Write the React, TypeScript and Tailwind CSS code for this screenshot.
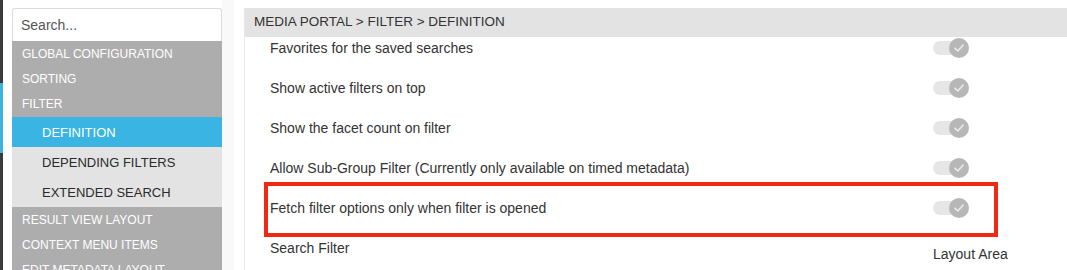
import React from 'react';

const font = { fontFamily: '"Liberation Sans", Arial, sans-serif' };

const Toggle: React.FC = () => (
  <div className="relative w-[36px] h-[22px] flex items-center">
    <div className="w-[30px] h-[14px] rounded-full bg-[#e6e6e6]" />
    <div className="absolute left-[16px] top-[1px] w-[20px] h-[20px] rounded-full bg-[#b7b7b7] flex items-center justify-center">
      <svg width="12" height="12" viewBox="0 0 12 12" fill="none" stroke="#ececec" strokeWidth="1.6" strokeLinecap="round" strokeLinejoin="round">
        <path d="M2 6.4 L4.8 9 L10 3.2" />
      </svg>
    </div>
  </div>
);

const mainItems1 = ['GLOBAL CONFIGURATION', 'SORTING', 'FILTER'];
const subItems = ['DEFINITION', 'DEPENDING FILTERS', 'EXTENDED SEARCH'];
const mainItems2 = ['RESULT VIEW LAYOUT', 'CONTEXT MENU ITEMS', 'EDIT METADATA LAYOUT'];

const rows = [
  'Favorites for the saved searches',
  'Show active filters on top',
  'Show the facet count on filter',
  'Allow Sub-Group Filter (Currently only available on timed metadata)',
  'Fetch filter options only when filter is opened',
];

export default function App() {
  return (
    <div className="flex w-[1067px] h-[270px] overflow-hidden bg-white text-[#333]" style={font}>
      {/* outer nav edge */}
      <div className="w-[3px] flex flex-col shrink-0">
        <div className="h-[83px] bg-[#3b3b3b]" />
        <div className="h-[70px] bg-[#3ab4e2]" />
        <div className="flex-1 bg-[#3b3b3b]" />
      </div>

      {/* sidebar */}
      <div className="w-[219px] pl-[9px] pt-[8px] shrink-0">
        <div className="h-[33px] border border-[#dcdcdc] border-b-0 rounded-t-[3px] bg-white flex items-center pl-[8px] text-[14px] text-[#555]">
          Search...
        </div>
        <div className="bg-[#adadad] pb-[1px]">
          {mainItems1.map(i => (
            <div key={i} className="h-[25px] flex items-center pl-[10px] text-[12px] text-white">{i}</div>
          ))}
        </div>
        <div className="bg-[#e3e3e3]">
          {subItems.map((i, idx) => (
            <div
              key={i}
              className={`h-[30px] flex items-center pl-[30px] pt-[2px] text-[13px] ${idx === 0 ? 'bg-[#3ab4e2] text-white' : 'text-[#2b2b2b]'}`}
            >
              {i}
            </div>
          ))}
        </div>
        <div className="bg-[#adadad]">
          {mainItems2.map(i => (
            <div key={i} className="h-[25px] flex items-center pl-[10px] text-[12px] text-white">{i}</div>
          ))}
        </div>
      </div>

      <div className="w-[12px] bg-[#f9f9f9] shrink-0" />
      <div className="w-[10px] shrink-0" />

      {/* main */}
      <div className="flex-1 pt-[8px] relative">
        <div className="h-full border-l border-[#e8e8e8]">
          <div className="relative z-10 h-[29px] bg-[#e3e3e3] flex items-center pl-[9px] text-[13.5px] text-[#333]">
            MEDIA PORTAL &gt; FILTER &gt; DEFINITION
          </div>
          <div className="-mt-[9px]">
            {rows.map(r => (
              <div key={r} className="h-[40px] flex items-center">
                <div className="flex-1 pl-[25px] pt-[1px] text-[14px] text-[#333]">{r}</div>
                <div className="w-[134px]">
                  <Toggle />
                </div>
              </div>
            ))}
            <div className="h-[40px] flex items-center">
              <div className="flex-1 pl-[25px] pt-[1px] text-[14px] text-[#333]">Search Filter</div>
              <div className="w-[134px] pt-[12px] text-[14px] text-[#333]">Layout Area</div>
            </div>
          </div>
        </div>
        {/* highlight */}
        <div className="absolute left-[20px] top-[182px] w-[734px] h-[55px] border-[4px] border-[#ee2a12]" />
      </div>
    </div>
  );
}
